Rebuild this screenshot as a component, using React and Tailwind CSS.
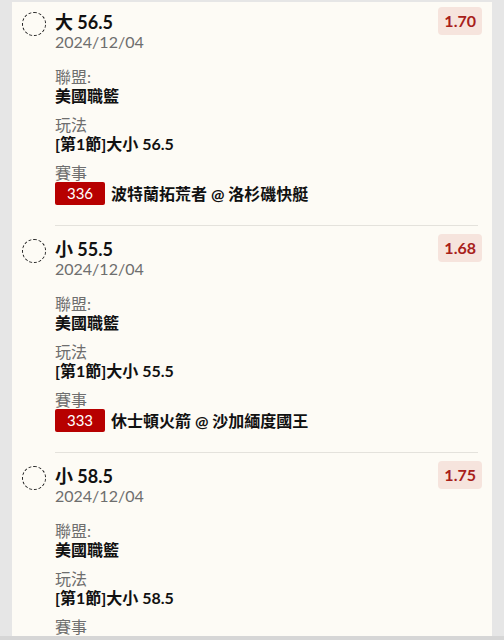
const bets = [
  { pick: '大 56.5', date: '2024/12/04', odds: '1.70', league: '美國職籃', market: '[第1節]大小 56.5', no: '336', match: '波特蘭拓荒者 @ 洛杉磯快艇' },
  { pick: '小 55.5', date: '2024/12/04', odds: '1.68', league: '美國職籃', market: '[第1節]大小 55.5', no: '333', match: '休士頓火箭 @ 沙加緬度國王' },
  { pick: '小 58.5', date: '2024/12/04', odds: '1.75', league: '美國職籃', market: '[第1節]大小 58.5', no: '331', match: '猶他爵士 @ 鳳凰城太陽' },
];

const BetItem = ({ bet, first }) => {
  return (
    <div className={first ? 'pt-[5px]' : 'pt-[8px]'}>
      <div className="flex pl-[10px] pr-[10px]">
        <div className="mt-[5px] w-6 h-6 shrink-0 rounded-full border border-dashed border-[#222]" />
        <div className="ml-[9px] flex-1">
          <div className="mt-[4px] text-[18px] leading-[22px] font-bold text-[#111]">{bet.pick}</div>
          <div className="text-[16px] leading-[18px] text-[#6e6e6e]">{bet.date}</div>
        </div>
        <div className="h-[28px] px-[6px] rounded-[4px] bg-[#f6e4dd] text-[#a8201a] text-[16px] font-bold leading-[28px]">
          {bet.odds}
        </div>
      </div>
      <div className="ml-[43px] mt-[16px] pr-[14px] pb-[20px] text-[16px] leading-[19px]">
        <div className="text-[#6e6e6e]">聯盟:</div>
        <div className="font-bold text-[#111]">{bet.league}</div>
        <div className="mt-[10px] text-[#6e6e6e]">玩法</div>
        <div className="font-bold text-[#111]">{bet.market}</div>
        <div className="mt-[10px] text-[#6e6e6e]">賽事</div>
        <div className="flex items-center gap-[6px]">
          <span className="w-[50px] h-[23px] rounded-[2px] bg-[#b70000] text-white text-[15px] leading-[23px] text-center">
            {bet.no}
          </span>
          <span className="font-bold text-[#111]">{bet.match}</span>
        </div>
      </div>
    </div>
  );
};

const App = () => {
  return (
    <div
      className="h-[640px] overflow-hidden bg-[#e6e6e6] pt-[2px] border-b-4 border-[#d6d6d6]"
      style={{ fontFamily: 'Lato, "Noto Sans CJK TC", sans-serif' }}
    >
      <div className="mx-3 bg-[#fdfbf5] min-h-full">
        {bets.map((bet, i) => (
          <div key={bet.no}>
            {i > 0 && <div className="ml-[43px] mr-[14px] h-px bg-[#e4e2dc]" />}
            <BetItem bet={bet} first={i === 0} />
          </div>
        ))}
      </div>
    </div>
  );
};

export default App;
